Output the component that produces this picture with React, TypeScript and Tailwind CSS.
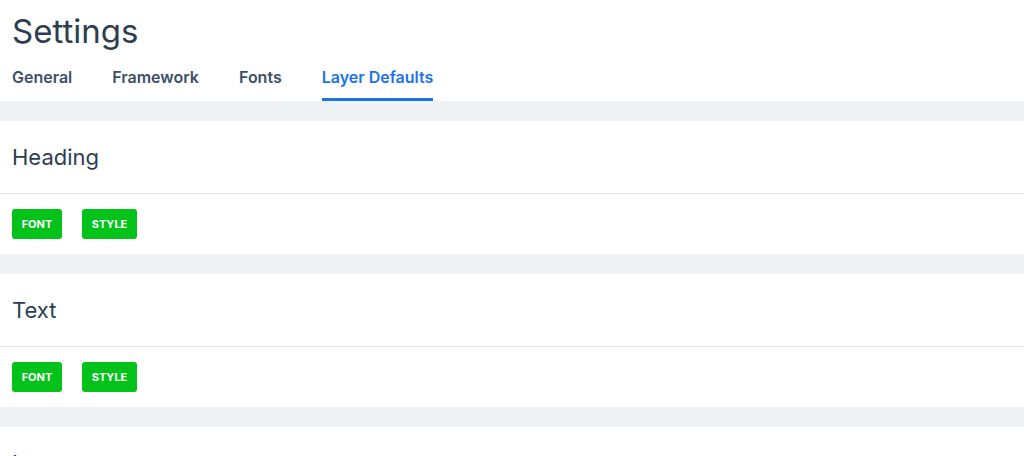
import React from 'react';

const tabs = ['General', 'Framework', 'Fonts', 'Layer Defaults'];
const sections = ['Heading', 'Text', 'Image'];

function Section({ title }: { title: string }) {
  return (
    <div className="bg-white">
      <div className="h-[73px] flex items-center px-3 border-b border-[#e4e7ea]">
        <h2 className="text-[22px] leading-7 text-[#2c3e50]">{title}</h2>
      </div>
      <div className="h-[60px] flex items-center gap-5 px-3">
        <button className="h-[30px] w-[50px] rounded-[3px] bg-[#03c31b] text-white text-[11px] font-bold uppercase">Font</button>
        <button className="h-[30px] w-[55px] rounded-[3px] bg-[#03c31b] text-white text-[11px] font-bold uppercase">Style</button>
      </div>
    </div>
  );
}

export default function App() {
  const active = 'Layer Defaults';
  return (
    <div className="min-h-screen bg-[#eff2f5] font-['Inter',sans-serif]">
      <div className="bg-white px-3 pt-[11px]">
        <h1 className="text-[33px] leading-10 text-[#2c3e50]">Settings</h1>
        <div className="flex gap-10 mt-4">
          {tabs.map((t) => (
            <div
              key={t}
              className={
                t === active
                  ? 'pb-[11px] border-b-[3px] border-[#1a73e8] text-[16px] leading-5 font-semibold text-[#1a73e8]'
                  : 'pb-[11px] border-b-[3px] border-transparent text-[16px] leading-5 font-semibold text-[#3b5068]'
              }
            >
              {t}
            </div>
          ))}
        </div>
      </div>
      <div className="flex flex-col gap-5 pt-5">
        {sections.map((s) => (
          <Section key={s} title={s} />
        ))}
      </div>
    </div>
  );
}
